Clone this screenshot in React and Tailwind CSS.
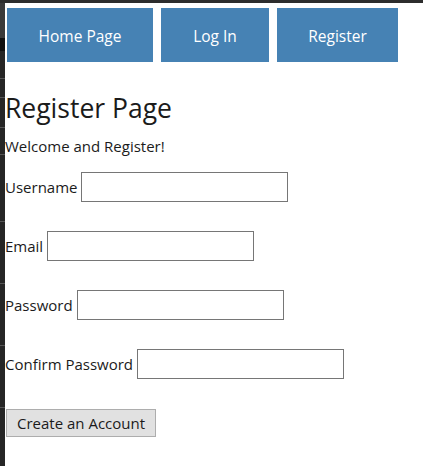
import { useState } from 'react';

const FONT = { fontFamily: '"Open Sans", "Noto Sans", Arial, sans-serif' };

// thin dark strip at the left edge (window chrome behind the page)
function EdgeStrip() {
  return (
    <div className="flex w-[5px] shrink-0 flex-col bg-[#262626]">
      <div className="h-[35px] bg-[#3a3a3a]" />
      <div className="h-[13px] bg-[#101010]" />
      <div className="h-[28px] border-b border-[#555]" />
      <div className="h-[19px] border-b border-[#555]" />
      <div className="h-[30px] border-b border-[#555]" />
      <div className="h-[27px] border-b border-[#555]" />
      <div className="h-[67px] border-b border-[#555]" />
      <div className="h-[62px] border-b border-[#555]" />
      <div className="h-[62px] border-b border-[#555]" />
      <div className="h-[62px] border-b border-[#555]" />
      <div className="flex-1" />
    </div>
  );
}

function NavButton({ label, width }) {
  return (
    <button
      className={`flex h-[54px] items-center justify-center bg-[#4682b4] pt-[3px] text-[15.5px] text-white ${width}`}
    >
      {label}
    </button>
  );
}

function Field({ label, type = 'text', value, onChange }) {
  return (
    <div className="flex items-center gap-1">
      <label className="text-[15px] leading-5">{label}</label>
      <input
        type={type}
        value={value}
        onChange={(e) => onChange(e.target.value)}
        className="h-[30px] w-[207px] border border-[#767676] bg-white px-1 text-[15px] outline-none"
      />
    </div>
  );
}

export default function App() {
  const [form, setForm] = useState({ username: '', email: '', password: '', confirm: '' });
  const set = (k) => (v) => setForm((f) => ({ ...f, [k]: v }));

  return (
    <div className="flex min-h-[466px] flex-col bg-white text-[#1b1b1b]" style={FONT}>
      <div className="h-[3px] bg-[#2d2d2d]" />
      <div className="flex flex-1">
        <EdgeStrip />
        <div className="flex flex-1 flex-col">
          <nav className="flex gap-2 pl-[2px] pt-[5px]">
            <NavButton label="Home Page" width="w-[146px]" />
            <NavButton label="Log In" width="w-[108px]" />
            <NavButton label="Register" width="w-[121px]" />
          </nav>

          <h1 className="mt-[30px] text-[26.5px] leading-8">Register Page</h1>
          <p className="mt-[12px] text-[15px] leading-5">Welcome and Register!</p>

          <form className="mt-4 flex flex-col gap-[29px]" onSubmit={(e) => e.preventDefault()}>
            <Field label="Username" value={form.username} onChange={set('username')} />
            <Field label="Email" type="email" value={form.email} onChange={set('email')} />
            <Field label="Password" type="password" value={form.password} onChange={set('password')} />
            <Field label="Confirm Password" type="password" value={form.confirm} onChange={set('confirm')} />
            <div className="mt-px">
              <button
                type="submit"
                className="ml-px h-[28px] w-[150px] border border-[#adadad] bg-[#e1e1e1] text-[15px]"
              >
                Create an Account
              </button>
            </div>
          </form>
        </div>
      </div>
    </div>
  );
}
